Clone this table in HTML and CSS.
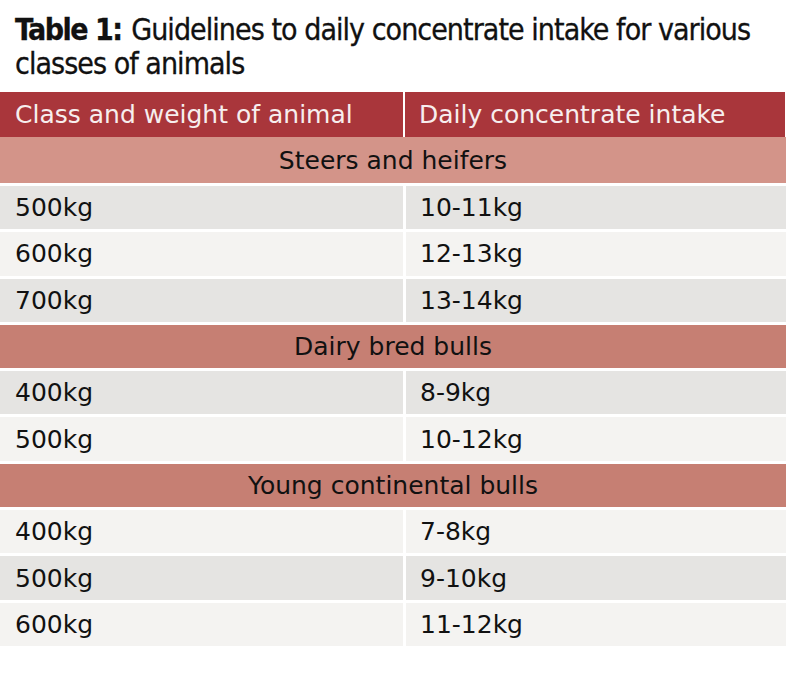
FILE: index.html
```html
<!DOCTYPE html>
<html lang="en">
<head>
<meta charset="utf-8">
<title>Table 1</title>
<link rel="stylesheet" href="styles.css">
</head>
<body>
<div class="page">
  <h1 class="title"><span class="line"><span class="label">Table 1:</span> <span>Guidelines to daily concentrate intake for various</span></span><span class="line">classes of animals</span></h1>
  <div class="table">
    <div class="head">
      <div class="cell">Class and weight of animal</div>
      <div class="cell">Daily concentrate intake</div>
    </div>
    <div class="band band-light first">Steers and heifers</div>
    <div class="row gray"><div class="cell">500kg</div><div class="cell">10-11kg</div></div>
    <div class="row light"><div class="cell">600kg</div><div class="cell">12-13kg</div></div>
    <div class="row gray"><div class="cell">700kg</div><div class="cell">13-14kg</div></div>
    <div class="band">Dairy bred bulls</div>
    <div class="row gray"><div class="cell">400kg</div><div class="cell">8-9kg</div></div>
    <div class="row light"><div class="cell">500kg</div><div class="cell">10-12kg</div></div>
    <div class="band">Young continental bulls</div>
    <div class="row light"><div class="cell">400kg</div><div class="cell">7-8kg</div></div>
    <div class="row gray"><div class="cell">500kg</div><div class="cell">9-10kg</div></div>
    <div class="row light"><div class="cell">600kg</div><div class="cell">11-12kg</div></div>
  </div>
</div>
</body>
</html>
```

FILE: styles.css
```css
html, body {
  margin: 0;
  padding: 0;
  background: #ffffff;
}

.page {
  width: 790px;
  height: 693px;
  overflow: hidden;
}

.title {
  width: 775px;
  margin: 13px 0 11px 15px;
  font-family: "DejaVu Sans Condensed", "DejaVu Sans", sans-serif;
  font-stretch: condensed;
  font-size: 30px;
  line-height: 34px;
  letter-spacing: -0.95px;
  font-weight: normal;
  color: #111111;
  -webkit-text-stroke: 0.3px #111111;
}

.line {
  display: block;
  white-space: nowrap;
}

.label {
  font-weight: bold;
  letter-spacing: -1.5px;
  margin-right: 2px;
}

.table {
  width: 786px;
  display: flex;
  flex-direction: column;
  gap: 3px;
  font-family: "DejaVu Sans", sans-serif;
  font-size: 25px;
  color: #111111;
}

.head {
  display: grid;
  grid-template-columns: 403px 380px;
  column-gap: 2px;
  height: 45px;
  background: #ffffff;
  margin-bottom: -3px;
}

.head .cell {
  background: #a9363b;
  color: #f7eeee;
  display: flex;
  align-items: center;
  padding-left: 15px;
}

.head .cell + .cell {
  padding-left: 14px;
}

.band {
  height: 43.3px;
  display: flex;
  align-items: center;
  justify-content: center;
  background: #c67f73;
}

.band.first {
  height: 46px;
}

.band-light {
  background: #d39489;
}

.row {
  display: grid;
  grid-template-columns: 403px 380px;
  column-gap: 3px;
  height: 43.3px;
}

.row .cell {
  display: flex;
  align-items: center;
  padding-left: 15px;
}

.row .cell + .cell {
  padding-left: 14px;
}

.gray .cell {
  background: #e5e4e2;
}

.light .cell {
  background: #f4f3f1;
}
```
